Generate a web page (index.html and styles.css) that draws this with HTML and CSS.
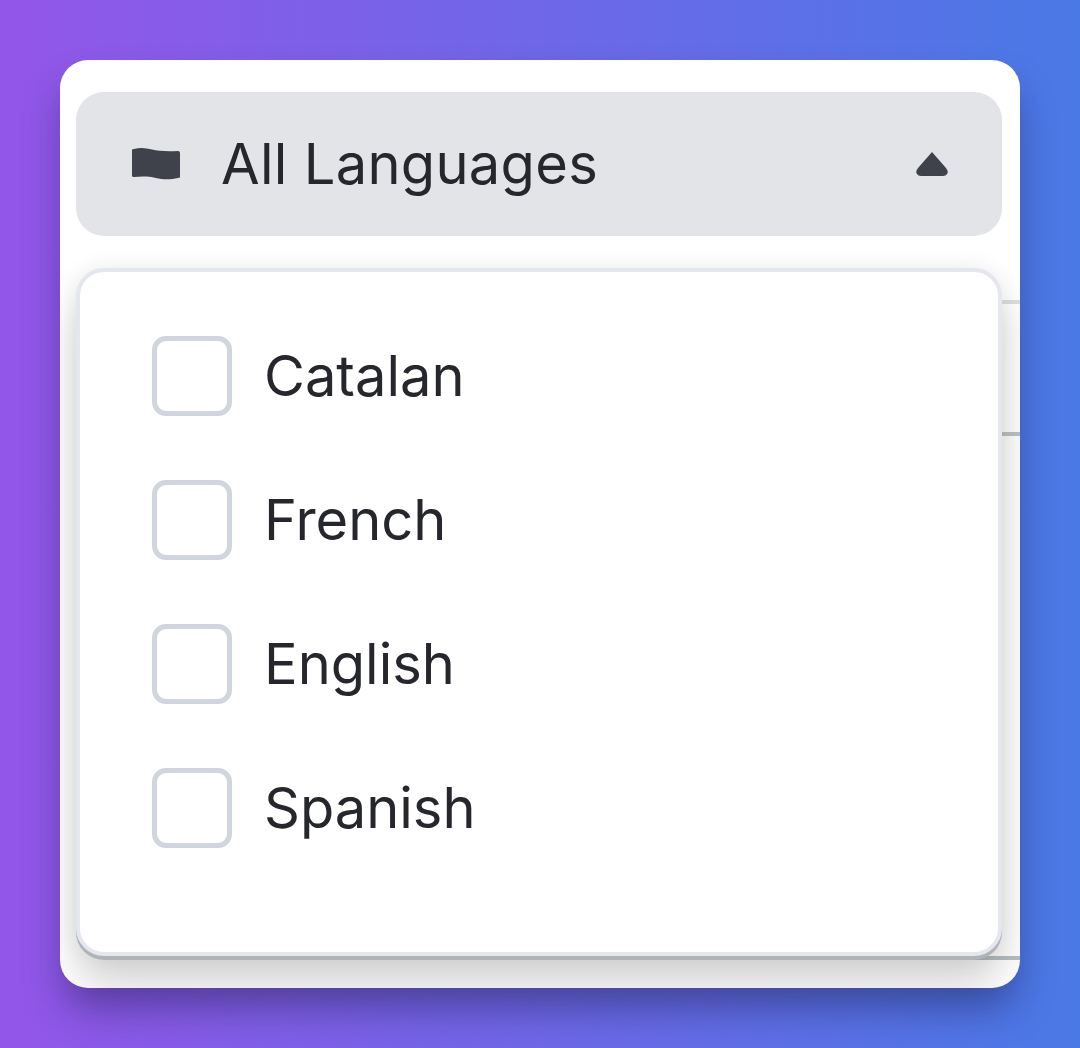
FILE: index.html
```html
<!DOCTYPE html>
<html lang="en">
<head>
  <meta charset="UTF-8">
  <meta name="viewport" content="width=device-width, initial-scale=1">
  <title>Language filter</title>
  <link rel="stylesheet" href="styles.css">
</head>
<body>

<div class="card">
  <button class="filter-btn">
    <svg class="flag-icon" viewBox="0 0 48 32" width="48" height="32">
      <path fill="#3f424a" d="M0 2Q0 1 2 1C8 -0.5 14 0 20 1.5C26 3 34 3.5 46 3Q48 3 48 5V29Q48 30 46 30C38 32 30 31.5 24 30C16 28 8 28.5 2 29Q0 29 0 28Z"/>
    </svg>
    <span class="filter-label">All Languages</span>
    <svg class="caret-icon" viewBox="0 0 32 24" width="32" height="24">
      <path fill="#3f424a" d="M16 0L30 16Q33 20 31 22Q30 24 27 24L5 24Q2 24 1 22Q-1 20 2 16Z"/>
    </svg>
  </button>

  <div class="rows">
    <div class="row"></div>
    <div class="row row-second"></div>
    <div class="row row-last"></div>
  </div>

  <div class="dropdown">
    <label class="option"><span class="checkbox"></span>Catalan</label>
    <label class="option"><span class="checkbox"></span>French</label>
    <label class="option"><span class="checkbox"></span>English</label>
    <label class="option"><span class="checkbox"></span>Spanish</label>
  </div>
</div>

</body>
</html>
```

FILE: styles.css
```css
html, body {
  height: 100%;
}
body {
  margin: 0;
  padding: 60px;
  box-sizing: border-box;
  background: linear-gradient(90deg, #9356e9 0%, #4a79e6 100%);
  font-family: Inter, "Liberation Sans", sans-serif;
  color: #25272c;
}
.card {
  position: relative;
  height: 928px;
  padding: 32px 18px 0 16px;
  box-sizing: border-box;
  background: #fff;
  border-radius: 28px;
  overflow: hidden;
  box-shadow: 0 24px 40px -6px rgba(20, 20, 60, 0.45);
}
.filter-btn {
  display: flex;
  align-items: center;
  width: 100%;
  height: 144px;
  padding: 0 54px 0 56px;
  background: #e3e4e8;
  border: none;
  border-radius: 28px;
  font: inherit;
  color: inherit;
}
.flag-icon {
  margin-right: 41px;
}
.filter-label {
  flex: 1;
  font-size: 56px;
  letter-spacing: 0.3px;
  text-align: left;
}
.rows {
  margin: 64px -18px 0 28px;
}
.row {
  border-top: 4px solid #dcdee2;
  height: 128px;
}
.row-second {
  border-top-color: #bcc3c6;
  height: 520px;
}
.row-last {
  border-top-color: #b8bfc2;
}
.dropdown {
  position: absolute;
  top: 208px;
  left: 16px;
  width: 926px;
  height: 688px;
  padding: 64px 72px 0;
  box-sizing: border-box;
  background: #fff;
  border: 4px solid #e5e7ee;
  border-radius: 28px;
  box-shadow: 0 4px 0 #aeb4b8, 0 30px 40px rgba(0, 0, 0, 0.17), 0 0 24px rgba(0, 0, 0, 0.07);
}
.option {
  display: flex;
  align-items: center;
  height: 144px;
  margin-top: -32px;
  margin-bottom: 32px;
  font-size: 56px;
}
.checkbox {
  width: 80px;
  height: 80px;
  margin-right: 32px;
  box-sizing: border-box;
  border: 5px solid #cfd6dd;
  border-radius: 14px;
}
```
